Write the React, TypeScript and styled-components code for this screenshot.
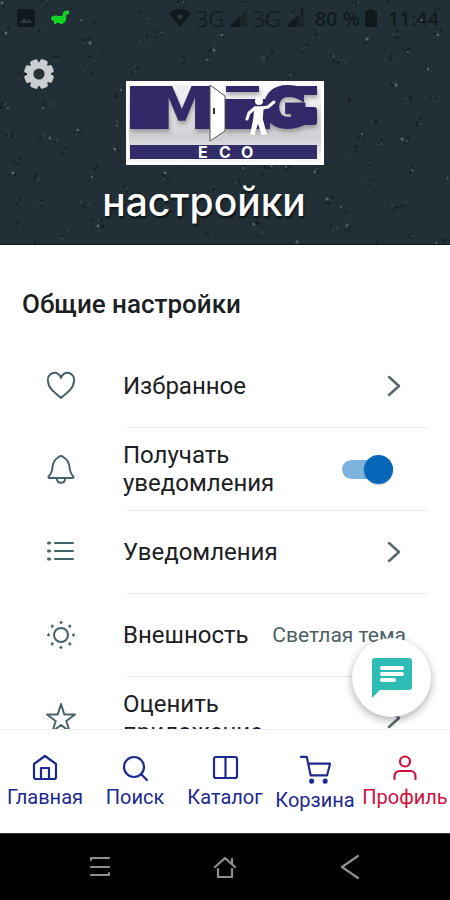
import React from "react";
import styled, { createGlobalStyle } from "styled-components";

const colors = {
  header: "#222f36",
  statusInk: "#10191e",
  text: "#1b2023",
  icon: "#46636c",
  navy: "#1c2990",
  active: "#d0103c",
  teal: "#2fbcb4",
  blue: "#0667b8",
};

const GlobalStyle = createGlobalStyle`
  *, *::before, *::after { box-sizing: border-box; }
  body { margin: 0; background: #fff; font-family: Roboto, "Noto Sans", sans-serif; }
  button { font: inherit; color: inherit; background: none; border: 0; padding: 0; cursor: pointer; }
`;

const Screen = styled.div`
  display: flex;
  flex-direction: column;
  height: 100vh;
  overflow: hidden;
`;

const Header = styled.header`
  position: relative;
  flex: none;
  padding-bottom: 20px;
  background: ${colors.header};
  border-bottom: 1px solid #10181c;
  overflow: hidden;
`;

const Texture = styled.svg`
  position: absolute;
  inset: 0;
  width: 100%;
  height: 100%;
`;

const StatusBar = styled.div`
  position: relative;
  display: flex;
  align-items: center;
  justify-content: space-between;
  height: 36px;
  padding: 0 11px 0 17px;
  color: ${colors.statusInk};
  font-family: "Noto Sans", sans-serif;
  font-size: 20px;
`;

const StatusGroup = styled.div<{ $gap: number }>`
  display: flex;
  align-items: center;
  gap: ${(p) => p.$gap}px;
`;

const Network = styled.span`
  font-size: 22px;
  font-weight: 300;
`;

const Clock = styled.span`
  margin-left: 6px;
  font-weight: 500;
`;

const GearButton = styled.button`
  position: relative;
  display: block;
  width: 32px;
  height: 32px;
  margin: 22px 0 0 23px;
`;

const Brand = styled.div`
  position: relative;
  display: flex;
  flex-direction: column;
  align-items: center;
  margin-top: -9px;
`;

const LogoArt = styled.svg`
  display: block;
  overflow: visible;
`;

const Title = styled.h1`
  margin: 14px 0 0;
  padding-right: 42px;
  color: #fff;
  font: 500 39px/45px Inter, sans-serif;
  text-shadow: 1px 2px 2px #0b1114;
`;

const Content = styled.main`
  flex: 1;
  min-height: 0;
  overflow: hidden;
`;

const SectionTitle = styled.h2`
  margin: 0;
  padding: 43px 22px 25px;
  color: ${colors.text};
  font-size: 26px;
  line-height: 32px;
  font-weight: 500;
`;

const List = styled.ul`
  margin: 0;
  padding: 0;
  list-style: none;
`;

const Item = styled.li`
  &::after {
    content: "";
    display: block;
    height: 1px;
    margin: 0 21px 0 127px;
    background: #ececee;
  }
`;

const Row = styled.div`
  display: flex;
  align-items: center;
  height: 82px;
  padding-right: 44px;
`;

const RowIcon = styled.span`
  display: flex;
  flex: none;
  justify-content: center;
  width: 121px;
  margin-right: 2px;
`;

const RowLabel = styled.label`
  max-width: 160px;
  color: ${colors.text};
  font-size: 24px;
  line-height: 28px;
`;

const RowValue = styled.span`
  margin-left: auto;
  color: #4b6067;
  font-size: 21px;
  line-height: 28px;
  white-space: nowrap;
`;

const ChevronButton = styled.button`
  display: flex;
  margin-left: auto;
`;

const Toggle = styled.input`
  appearance: none;
  display: flex;
  align-items: center;
  justify-content: flex-end;
  width: 51px;
  height: 19px;
  margin: 0 13px 0 auto;
  background: #7db3dd;
  border-radius: 15px;
  &::after {
    content: "";
    flex: none;
    width: 29px;
    height: 29px;
    border-radius: 50%;
    background: ${colors.blue};
    box-shadow: 0 1px 2px rgba(0, 0, 0, 0.25);
  }
`;

const Footer = styled.footer`
  position: relative;
  flex: none;
`;

const ChatButton = styled.button`
  position: absolute;
  right: 19px;
  bottom: 183px;
  display: grid;
  place-items: center;
  width: 79px;
  height: 79px;
  border-radius: 50%;
  background: #fff;
  box-shadow: 0 3px 9px rgba(0, 0, 0, 0.32);
`;

const Tabs = styled.nav`
  display: grid;
  grid-template-columns: repeat(5, 1fr);
  height: 104px;
  padding-top: 24px;
  border-top: 1px solid #f0f0f2;
  background: #fff;
`;

const Tab = styled.a<{ $active?: boolean }>`
  display: flex;
  flex-direction: column;
  align-items: center;
  color: ${(p) => (p.$active ? colors.active : colors.navy)};
  font-size: 20px;
  line-height: 30px;
  text-decoration: none;
  white-space: nowrap;
`;

const SystemNav = styled.nav`
  display: flex;
  align-items: center;
  justify-content: space-between;
  height: 67px;
  padding: 0 87px;
  background: #000;
  border-top: 1px solid #333;
  color: #8f8f8f;
`;

const SystemButton = styled.button`
  display: flex;
`;

function makeSpecks() {
  let seed = 17;
  const rnd = () => (seed = (seed * 16807) % 2147483647) / 2147483647;
  const specks: { x: number; y: number; r: number; fill: string }[] = [];
  for (let row = 0; row < 9; row++) {
    for (let col = 0; col < 15; col++) {
      const cx = col * 31 + rnd() * 28;
      const cy = row * 28 + rnd() * 26;
      const light = rnd() > 0.45;
      for (let k = 0; k < 5; k++) {
        specks.push({
          x: Math.round(cx + rnd() * 8 - 4),
          y: Math.round(cy + rnd() * 8 - 4),
          r: 0.8 + rnd() * 0.9,
          fill: k === 0 && light ? "#6b797f" : k < 2 ? "#35444b" : "#141d22",
        });
      }
    }
  }
  return specks;
}
const specks = makeSpecks();

const Logo = () => (
  <LogoArt width="198" height="84" viewBox="0 0 198 84" role="img" aria-label="MIG ECO">
    <defs>
      <linearGradient id="plate" x1="0" y1="0" x2="0" y2="1">
        <stop offset="0" stopColor="#fff" />
        <stop offset=".5" stopColor="#dcdce0" />
        <stop offset=".68" stopColor="#cfcfd3" />
        <stop offset="1" stopColor="#fafafa" />
      </linearGradient>
      <filter id="soft" x="-10%" y="-10%" width="120%" height="140%">
        <feDropShadow dx="1" dy="3" stdDeviation="2" floodColor="#444" floodOpacity=".45" />
      </filter>
    </defs>
    <rect width="198" height="84" fill="#fff" />
    <rect x="3" y="3" width="192" height="78" fill="url(#plate)" />
    <g filter="url(#soft)" fill="#322c68" stroke="#322c68" fontFamily="DejaVu Sans" fontWeight="700">
      <rect x="4" y="5" width="33" height="43" stroke="none" />
      <rect x="74" y="5" width="10" height="43" stroke="none" />
      <text x="27" y="48" fontSize="58" stroke="none">M</text>
      <rect x="100" y="5" width="33" height="6" stroke="none" />
      <rect x="98" y="18" width="46" height="30" stroke="none" />
      <text x="138" y="45" fontSize="52" strokeWidth="5">G</text>
      <rect x="158" y="5" width="33" height="9" stroke="none" />
      <rect x="176" y="26" width="15" height="18" rx="3" stroke="none" />
    </g>
    <path d="M49 4h14l-7 20Z" fill="#eeeef1" />
    <rect x="4" y="64" width="187" height="14" fill="#322c68" />
    <path d="M84 4 99 15V50L84 60Z" fill="#fff" stroke="#555" strokeWidth="1" />
    <path d="M88 27v6" stroke="#333" strokeWidth="2" />
    <g fill="#fff" stroke="#fff" strokeLinecap="round" strokeLinejoin="round">
      <circle cx="133" cy="20" r="4" stroke="none" />
      <path d="m129 27-6 5-2 6M136 27l6-1 6-5" fill="none" strokeWidth="3" />
      <path d="M129 26h8l-1 12 4 15h-4l-4-13-4 13h-3l3-15Z" strokeWidth="1.500" />
    </g>
    <g fill="#fff" fontFamily="Inter" fontWeight="700" fontSize="16">
      <text x="72" y="77">E</text>
      <text x="93" y="77">C</text>
      <text x="115" y="77">O</text>
    </g>
  </LogoArt>
);

const Gear = () => (
  <svg width="32" height="32" viewBox="0 0 32 32">
    <g fill="#c9ced2">
      {[0, 45, 90, 135].map((a) => (
        <rect key={a} x="12" y="1" width="8" height="30" rx="2" transform={`rotate(${a + 22} 16 16)`} />
      ))}
      <circle cx="16" cy="16" r="12" />
    </g>
    <circle cx="16" cy="16" r="5.600" fill="#263238" />
  </svg>
);

const Signal = ({ mark }: { mark?: boolean }) => (
  <svg width="20" height="20" viewBox="0 0 20 20">
    <path d="M19 1v18H1Z" fill="#1a252a" />
    <path d="M12 8v11H1Z" fill="currentColor" />
    {mark && <path d="M17 0v7M9 12l4 4m0-4-4 4" stroke="currentColor" strokeWidth="2" />}
  </svg>
);

const line = { fill: "none", stroke: "currentColor", strokeLinecap: "round", strokeLinejoin: "round" } as const;

const rowIcons = {
  heart: <path d="M15 27C9 22 2 17 2 10a6.600 6.600 0 0 1 13-3 6.600 6.600 0 0 1 13 3c0 7-7 12-13 17Z" />,
  bell: (
    <>
      <path d="M15 2c-1.500 0-2 1-3.500 2C8 6 7 9 6.500 13 6 18 5 20 3 22c-1 1-.5 2 .5 2h23c1 0 1.500-1 .5-2-2-2-3-4-3.500-9C23 9 22 6 18.500 4 17 3 16.500 2 15 2Z" />
      <path d="M11 25c0 5 8 5 8 0" />
    </>
  ),
  list: (
    <>
      <path d="M9 6h18M9 14h18M9 22h18" />
      <path d="M2.500 6h1M2.500 14h1M2.500 22h1" strokeWidth="3" />
    </>
  ),
  sun: (
    <>
      <circle cx="15" cy="15" r="7" />
      {[0, 45, 90, 135, 180, 225, 270, 315].map((a) => (
        <circle key={a} cx="15" cy="2.500" r="1" strokeWidth="1" fill="currentColor" transform={`rotate(${a} 15 15)`} />
      ))}
    </>
  ),
  star: <path d="m15 1 3.300 10.500H29L20.300 18l3.300 10.500L15 22l-8.600 6.500L9.700 18 1 11.500h10.700Z" />,
};

const RowGlyph = ({ name }: { name: keyof typeof rowIcons }) => (
  <svg width="30" height="30" viewBox="0 0 30 30" color={colors.icon} strokeWidth="2" {...line}>
    {rowIcons[name]}
  </svg>
);

const Chevron = () => (
  <svg width="24" height="24" viewBox="0 0 24 24" color="#56696f" {...line} strokeWidth="2.500">
    <path d="m7 3 10 9-10 9" />
  </svg>
);

const tabIcons = {
  home: <path d="M3 10 14 2l11 8v13a2 2 0 0 1-2 2H5a2 2 0 0 1-2-2ZM10 25V14h8v11" />,
  search: (
    <>
      <circle cx="13" cy="13" r="10" />
      <path d="m20 20 6 6" />
    </>
  ),
  catalog: (
    <>
      <rect x="3" y="3" width="23" height="21" rx="2" />
      <path d="M14.500 3v21" />
    </>
  ),
  cart: (
    <>
      <path d="M1 3h6l4 19h17l3-12H9" />
      <circle cx="12" cy="28" r="1.500" fill="currentColor" />
      <circle cx="26" cy="28" r="1.500" fill="currentColor" />
    </>
  ),
  profile: (
    <>
      <circle cx="14" cy="7.500" r="5" />
      <path d="M3.500 25v-3a5 5 0 0 1 5-5h11a5 5 0 0 1 5 5v3" />
    </>
  ),
};

const tabs: { icon: keyof typeof tabIcons; label: string; size: number; active?: boolean }[] = [
  { icon: "home", label: "Главная", size: 28 },
  { icon: "search", label: "Поиск", size: 28 },
  { icon: "catalog", label: "Каталог", size: 28 },
  { icon: "cart", label: "Корзина", size: 31 },
  { icon: "profile", label: "Профиль", size: 28, active: true },
];

const rows: { icon: keyof typeof rowIcons; label: string; kind: "link" | "toggle" | "value" }[] = [
  { icon: "heart", label: "Избранное", kind: "link" },
  { icon: "bell", label: "Получать уведомления", kind: "toggle" },
  { icon: "list", label: "Уведомления", kind: "link" },
  { icon: "sun", label: "Внешность", kind: "value" },
  { icon: "star", label: "Оценить приложение", kind: "link" },
];

export default function App() {
  return (
    <Screen>
      <GlobalStyle />
      <Header>
        <Texture aria-hidden="true">
          {specks.map((s, i) => (
            <circle key={i} cx={s.x} cy={s.y} r={s.r} fill={s.fill} opacity=".75" />
          ))}
        </Texture>
        <StatusBar>
          <StatusGroup $gap={16}>
            <svg width="18" height="18" viewBox="0 0 18 18">
              <rect width="18" height="18" rx="2" fill="currentColor" />
              <path d="m3 14 4-5 3 3 2-2 3 4Z" fill="#2b383e" />
            </svg>
            <svg width="19" height="16" viewBox="0 0 19 16">
              <path d="M0 8C1 5 5 5 8 6c3 0 4 0 4-3 1-2 3-3 6-2v3l-3 1c1 5-1 8-3 8v1H9v-1H5v1H3v-3C1 11 0 10 0 8Z" fill="#10d322" />
            </svg>
          </StatusGroup>
          <StatusGroup $gap={4}>
            <svg width="24" height="20" viewBox="0 0 24 20">
              <path d="M12 19 1 5q11-8 22 0Z" fill="currentColor" />
              <path d="M9 8q3-3 6 0l-3 4Z" fill="#2b3940" />
            </svg>
            <Network>3G</Network>
            <Signal />
            <Network>3G</Network>
            <Signal mark />
            <Clock>80 %</Clock>
            <svg width="14" height="20" viewBox="0 0 14 20">
              <path d="M4 1h6v2h3v16H1V3h3Z" fill="currentColor" />
            </svg>
            <Clock>11:44</Clock>
          </StatusGroup>
        </StatusBar>
        <GearButton aria-label="Параметры">
          <Gear />
        </GearButton>
        <Brand>
          <Logo />
          <Title>настройки</Title>
        </Brand>
      </Header>

      <Content>
        <SectionTitle>Общие настройки</SectionTitle>
        <List>
          {rows.map((r) => (
            <Item key={r.label}>
              <Row>
                <RowIcon>
                  <RowGlyph name={r.icon} />
                </RowIcon>
                <RowLabel htmlFor={r.icon}>{r.label}</RowLabel>
                {r.kind === "link" && (
                  <ChevronButton id={r.icon}>
                    <Chevron />
                  </ChevronButton>
                )}
                {r.kind === "toggle" && <Toggle id={r.icon} type="checkbox" role="switch" defaultChecked />}
                {r.kind === "value" && <RowValue>Светлая тема</RowValue>}
              </Row>
            </Item>
          ))}
        </List>
      </Content>

      <Footer>
        <Tabs>
          {tabs.map((t) => (
            <Tab key={t.label} href="#" $active={t.active}>
              <svg
                width={t.size}
                height={t.size}
                viewBox={t.icon === "cart" ? "0 0 32 32" : "0 0 28 28"}
                {...line}
                strokeWidth="2.200"
              >
                {tabIcons[t.icon]}
              </svg>
              {t.label}
            </Tab>
          ))}
        </Tabs>
        <SystemNav>
          <SystemButton aria-label="Меню">
            <svg width="26" height="26" viewBox="0 0 26 26" {...line} strokeWidth="2.200">
              <path d="M4 6V4h18M4 13h18M4 21h18v-2" />
            </svg>
          </SystemButton>
          <SystemButton aria-label="Домой">
            <svg width="26" height="26" viewBox="0 0 26 26" {...line} strokeWidth="2.200">
              <path d="m3 13 10-9 10 9M20 10V5M6 15v8h14v-8" />
            </svg>
          </SystemButton>
          <SystemButton aria-label="Назад">
            <svg width="26" height="26" viewBox="0 0 26 26" {...line} strokeWidth="2.200">
              <path d="M21 2 5 13l16 11" />
            </svg>
          </SystemButton>
        </SystemNav>
        <ChatButton aria-label="Чат">
          <svg width="42" height="42" viewBox="0 0 42 42">
            <path d="M4 1h34a3 3 0 0 1 3 3v26a3 3 0 0 1-3 3H9l-8 8V4a3 3 0 0 1 3-3Z" fill={colors.teal} />
            <path d="M11 11h20M11 17h20M11 23h12" stroke="#fff" strokeWidth="4" strokeLinecap="round" />
          </svg>
        </ChatButton>
      </Footer>
    </Screen>
  );
}
